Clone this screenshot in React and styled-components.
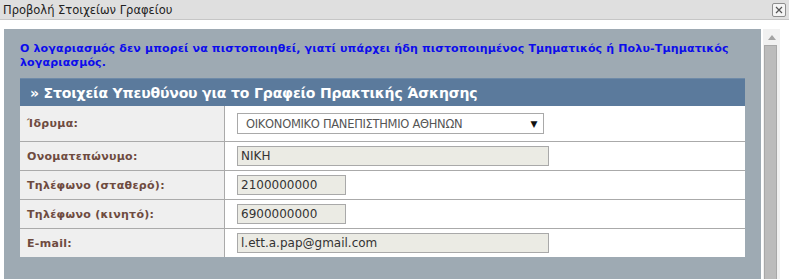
import React from "react";
import styled, { createGlobalStyle } from "styled-components";

const GlobalStyle = createGlobalStyle`
  html, body {
    margin: 0;
    padding: 0;
    background: #ffffff;
    font-family: "DejaVu Sans", Verdana, sans-serif;
    overflow: hidden;
  }
`;

const Dialog = styled.div`
  width: 789px;
  height: 279px;
  display: flex;
  flex-direction: column;
  background: #ffffff;
`;

const TitleBar = styled.div`
  height: 19px;
  flex-shrink: 0;
  display: flex;
  align-items: center;
  justify-content: space-between;
  padding: 0 3px;
  background: #dfdfdf;
  border-bottom: 1px solid #c6c6c6;
`;

const TitleText = styled.div`
  font-size: 11.5px;
  color: #222222;
`;

const CloseButton = styled.div`
  width: 12px;
  height: 12px;
  border: 1px solid #8e8e8e;
  border-radius: 2px;
  background: #f4f4f4;
  display: flex;
  align-items: center;
  justify-content: center;
`;

const Body = styled.div`
  flex: 1;
  display: flex;
  padding: 9px 0 0 4px;
  min-height: 0;
`;

const Panel = styled.div`
  width: 757px;
  background: #9eaab3;
  padding: 13px 16px 0 16px;
  box-sizing: border-box;
`;

const Message = styled.div`
  color: #0c0cec;
  font-size: 11px;
  font-weight: bold;
  line-height: 14px;
  letter-spacing: 0.16px;
`;

const SectionHeader = styled.div`
  margin-top: 8px;
  height: 28px;
  display: flex;
  align-items: center;
  padding-left: 10px;
  background: #5b7a9c;
  color: #ffffff;
  font-size: 14px;
  font-weight: bold;
  letter-spacing: -0.15px;
  border-top: 1px solid #6e8aa8;
  box-sizing: border-box;
`;

const Table = styled.div`
  display: grid;
  grid-template-columns: 205px 1fr;
  background: #ffffff;
`;

const LabelCell = styled.div`
  height: ${({ $tall }) => ($tall ? "35px" : "28px")};
  display: flex;
  align-items: center;
  padding-left: 7px;
  background: #efefef;
  color: #6e4b3f;
  font-size: 11px;
  font-weight: bold;
  letter-spacing: 0.3px;
  border-right: 1px solid #aaaaaa;
  border-bottom: ${({ $last }) => ($last ? "none" : "1px solid #aaaaaa")};
`;

const ValueCell = styled.div`
  height: ${({ $tall }) => ($tall ? "35px" : "28px")};
  display: flex;
  align-items: center;
  padding-left: 12px;
  border-bottom: ${({ $last }) => ($last ? "none" : "1px solid #aaaaaa")};
`;

const Select = styled.div`
  width: 291px;
  height: 19px;
  border: 1px solid #a9a9a9;
  background: #ffffff;
  display: flex;
  align-items: center;
  justify-content: space-between;
  padding: 0 6px 0 8px;
  color: #555555;
  font-size: 11.5px;
  letter-spacing: -0.3px;
`;

const Arrow = styled.span`
  font-size: 9px;
  color: #111111;
`;

const Input = styled.div`
  width: ${({ $short }) => ($short ? "104px" : "307px")};
  height: 18px;
  border: 1px solid #a9a9a9;
  background: #ebebe4;
  display: flex;
  align-items: center;
  padding-left: 3px;
  color: #333333;
  font-size: 12px;
`;

const Scrollbar = styled.div`
  width: 17px;
  margin-left: 2px;
  background: #f1f1f1;
  display: flex;
  flex-direction: column;
  align-items: center;
`;

const UpArrow = styled.div`
  height: 16px;
  display: flex;
  align-items: center;
  justify-content: center;
`;

const Thumb = styled.div`
  flex: 1;
  width: 13px;
  margin-right: 2px;
  background: #bcbcbc;
  border: 1px solid #a8a8a8;
  border-bottom: none;
  box-sizing: border-box;
`;

const rows = [
  { label: "Ίδρυμα:", kind: "select", value: "ΟΙΚΟΝΟΜΙΚΟ ΠΑΝΕΠΙΣΤΗΜΙΟ ΑΘΗΝΩΝ" },
  { label: "Ονοματεπώνυμο:", kind: "input", value: "ΝΙΚΗ" },
  { label: "Τηλέφωνο (σταθερό):", kind: "short", value: "2100000000" },
  { label: "Τηλέφωνο (κινητό):", kind: "short", value: "6900000000" },
  { label: "E-mail:", kind: "input", value: "l.ett.a.pap@gmail.com" },
];

export default function App() {
  return (
    <>
      <GlobalStyle />
      <Dialog>
        <TitleBar>
          <TitleText>Προβολή Στοιχείων Γραφείου</TitleText>
          <CloseButton>
            <svg width="8" height="8" viewBox="0 0 8 8">
              <path d="M1 1L7 7M7 1L1 7" stroke="#555" strokeWidth="1.2" />
            </svg>
          </CloseButton>
        </TitleBar>
        <Body>
          <Panel>
            <Message>
              Ο λογαριασμός δεν μπορεί να πιστοποιηθεί, γιατί υπάρχει ήδη
              πιστοποιημένος Τμηματικός ή Πολυ-Τμηματικός λογαριασμός.
            </Message>
            <SectionHeader>» Στοιχεία Υπευθύνου για το Γραφείο Πρακτικής Άσκησης</SectionHeader>
            <Table>
              {rows.map((r, i) => {
                const tall = r.kind === "select";
                const last = i === rows.length - 1;
                return (
                  <React.Fragment key={r.label}>
                    <LabelCell $tall={tall} $last={last}>
                      {r.label}
                    </LabelCell>
                    <ValueCell $tall={tall} $last={last}>
                      {r.kind === "select" ? (
                        <Select>
                          <span>{r.value}</span>
                          <Arrow>▼</Arrow>
                        </Select>
                      ) : (
                        <Input $short={r.kind === "short"}>{r.value}</Input>
                      )}
                    </ValueCell>
                  </React.Fragment>
                );
              })}
            </Table>
          </Panel>
          <Scrollbar>
            <UpArrow>
              <svg width="8" height="5" viewBox="0 0 8 5">
                <path d="M0 5L4 0L8 5Z" fill="#a3a3a3" />
              </svg>
            </UpArrow>
            <Thumb />
          </Scrollbar>
        </Body>
      </Dialog>
    </>
  );
}
